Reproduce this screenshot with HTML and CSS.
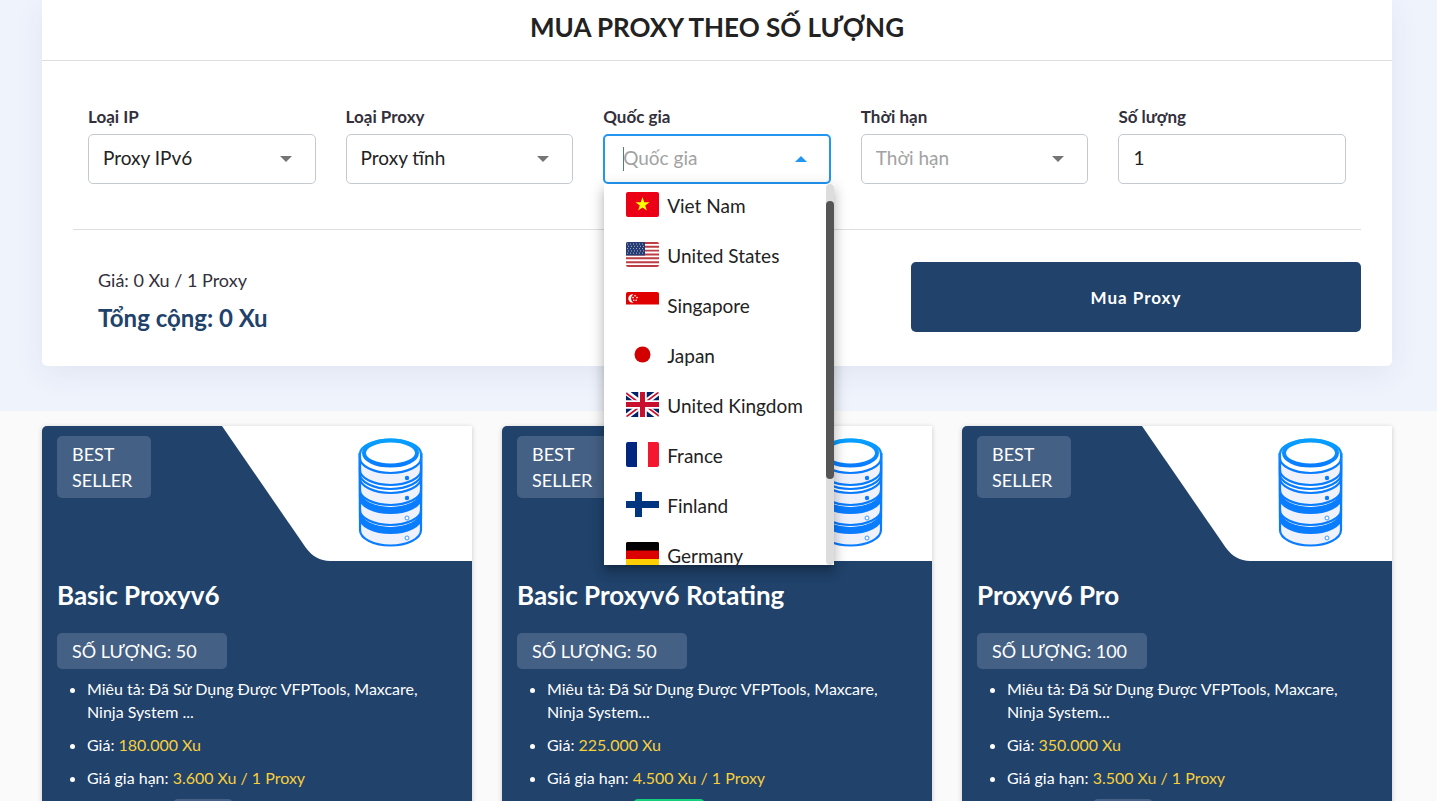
FILE: index.html
```
<!DOCTYPE html>
<html lang="vi">
<head>
    <meta charset="UTF-8">
    <meta name="viewport" content="width=device-width, initial-scale=1.0">
    <title>Mua Proxy</title>
    <link rel="stylesheet" href="styles.css">
</head>
<body>

    <!-- Shared shapes -->
    <svg class="sprite" width="0" height="0" aria-hidden="true">
        <defs>
            <linearGradient id="blue" gradientUnits="userSpaceOnUse" x1="0" y1="12" x2="0" y2="40">
                <stop offset="0" stop-color="#08a2ff"/>
                <stop offset="1" stop-color="#0a7cff"/>
            </linearGradient>
            <clipPath id="round">
                <rect width="33" height="25" rx="2"/>
            </clipPath>
        </defs>
        <symbol id="offer-art" viewBox="0 0 250 135">
            <path d="M0 0H250V135H108C98 135 90 130 84 122Z" fill="#fff"/>
            <g stroke="url(#blue)" stroke-width="2.200">
                <path d="M138 28V104A30.500 15.500 0 0 0 199 104V28Z" fill="#eff2fb"/>
                <path d="M138 28V92A30.500 15 0 0 0 199 92V28Z" fill="#0a7cff"/>
                <path d="M139 28V86A29.500 15 0 0 0 198 86V28Z" fill="#fff" stroke="none"/>
                <path d="M138 28V84A30.500 15 0 0 0 199 84V28Z" fill="#eff2fb"/>
                <path d="M138 28V72A30.500 15 0 0 0 199 72V28Z" fill="#0a7cff"/>
                <path d="M139 28V66A29.500 15 0 0 0 198 66V28Z" fill="#fff" stroke="none"/>
                <path d="M138 28V64A30.500 15 0 0 0 199 64V28Z" fill="#eff2fb"/>
                <path d="M138 28V52A30.500 15 0 0 0 199 52V28Z" fill="#fff"/>
                <path d="M138 28V48A30.500 15 0 0 0 199 48V28Z" fill="#fff"/>
                <path d="M138 28V44A30.500 15 0 0 0 199 44V28Z" fill="#eff2fb"/>
                <path d="M138 28V32A30.500 15 0 0 0 199 32V28Z" fill="#fff"/>
                <ellipse cx="168.500" cy="28" rx="30.500" ry="14.500" fill="#fff" stroke="none"/>
                <path d="M138 32V28A30.500 14.500 0 0 1 199 28V32" fill="none"/>
                <ellipse cx="168.500" cy="27" rx="26.500" ry="12.500" fill="#fff" stroke-width="4"/>
            </g>
            <circle cx="185" cy="52" r="2.200" fill="#0a7cff"/>
            <circle cx="185" cy="72" r="2.200" fill="#0a7cff"/>
            <circle cx="185" cy="92" r="2" fill="#fff" stroke="#3a9bff"/>
            <circle cx="185" cy="112" r="2" fill="#fff" stroke="#3a9bff"/>
        </symbol>
    </svg>

    <section class="buy">
        <form class="buy-card">
            <h2 class="buy-title">MUA PROXY THEO SỐ LƯỢNG</h2>

            <div class="fields">
                <div class="field">
                    <label for="ip-type">Loại IP</label>
                    <div class="control">
                        <select id="ip-type"><option>Proxy IPv6</option></select>
                        <span class="arrow"></span>
                    </div>
                </div>
                <div class="field">
                    <label for="proxy-type">Loại Proxy</label>
                    <div class="control">
                        <select id="proxy-type"><option>Proxy tĩnh</option></select>
                        <span class="arrow"></span>
                    </div>
                </div>
                <div class="field">
                    <label for="country">Quốc gia</label>
                    <div class="control open">
                        <input id="country" type="text" role="combobox" aria-expanded="true" aria-controls="country-list" placeholder="Quốc gia" autocomplete="off">
                        <span class="caret"></span>
                        <span class="arrow"></span>
                        <div class="menu">
                            <ul class="options" id="country-list" role="listbox">
                                <li role="option">
                                    <svg class="flag" viewBox="0 0 33 25"><g clip-path="url(#round)"><rect width="33" height="25" fill="#ec0015"/><path d="M16.500 5L18.200 10.200H23.600L19.200 13.400L20.900 18.600L16.500 15.400L12.100 18.600L13.800 13.400L9.400 10.200H14.800Z" fill="#ff0"/></g></svg>
                                    Viet Nam
                                </li>
                                <li role="option">
                                    <svg class="flag" viewBox="0 0 33 25"><g clip-path="url(#round)"><rect width="33" height="25" fill="#fff"/><path d="M0 1H33M0 4.800H33M0 8.600H33M0 12.500H33M0 16.300H33M0 20.200H33M0 24H33" stroke="#bd3d44" stroke-width="1.900"/><rect width="19" height="13.500" fill="#263d73"/><path d="M1 2H19M2 4.300H19M1 6.600H19M2 8.900H19M1 11.200H19" stroke="#aab3ca" stroke-dasharray="1 2"/></g></svg>
                                    United States
                                </li>
                                <li role="option">
                                    <svg class="flag" viewBox="0 0 33 25"><g clip-path="url(#round)"><rect width="33" height="25" fill="#fff"/><rect width="33" height="12.500" fill="#e00000"/><path d="M7.500 2.300A4.300 4.300 0 1 0 7.500 10.700A4.800 4.800 0 0 1 7.500 2.300Z" fill="#fff"/><g fill="#fff"><circle cx="9" cy="3.800" r=".8"/><circle cx="7" cy="5.600" r=".8"/><circle cx="11" cy="5.600" r=".8"/><circle cx="7.800" cy="8.200" r=".8"/><circle cx="10.200" cy="8.200" r=".8"/></g></g></svg>
                                    Singapore
                                </li>
                                <li role="option">
                                    <svg class="flag" viewBox="0 0 33 25"><circle cx="16.500" cy="12.500" r="8" fill="#d30000"/></svg>
                                    Japan
                                </li>
                                <li role="option">
                                    <svg class="flag" viewBox="0 0 33 25"><g clip-path="url(#round)"><rect width="33" height="25" fill="#012169"/><path d="M0 0L33 25M33 0L0 25" stroke="#fff" stroke-width="5.500"/><path d="M0 1L16 13M33 0L17 12M0 25L16 13M33 24L17 12" stroke="#c8102e" stroke-width="1.700"/><path d="M16.500 0V25M0 12.500H33" stroke="#fff" stroke-width="8.500"/><path d="M16.500 0V25M0 12.500H33" stroke="#c8102e" stroke-width="5"/></g></svg>
                                    United Kingdom
                                </li>
                                <li role="option">
                                    <svg class="flag" viewBox="0 0 33 25"><g clip-path="url(#round)"><rect width="11" height="25" fill="#00267f"/><rect x="11" width="11" height="25" fill="#fff"/><rect x="22" width="11" height="25" fill="#f31830"/></g></svg>
                                    France
                                </li>
                                <li role="option">
                                    <svg class="flag" viewBox="0 0 33 25"><g clip-path="url(#round)"><rect width="33" height="25" fill="#fff"/><path d="M12.500 0V25M0 12.500H33" stroke="#003580" stroke-width="7"/></g></svg>
                                    Finland
                                </li>
                                <li role="option">
                                    <svg class="flag" viewBox="0 0 33 25"><g clip-path="url(#round)"><rect width="33" height="25" fill="#ffce00"/><rect width="33" height="17" fill="#d00"/><rect width="33" height="8.500" fill="#000"/></g></svg>
                                    Germany
                                </li>
                            </ul>
                            <div class="scrollbar"><span class="thumb"></span></div>
                        </div>
                    </div>
                </div>
                <div class="field">
                    <label for="period">Thời hạn</label>
                    <div class="control">
                        <select id="period" class="empty"><option value="">Thời hạn</option></select>
                        <span class="arrow"></span>
                    </div>
                </div>
                <div class="field">
                    <label for="amount">Số lượng</label>
                    <div class="control">
                        <input id="amount" type="text" inputmode="numeric" value="1">
                    </div>
                </div>
            </div>

            <div class="summary">
                <div class="prices">
                    <p class="price">Giá: 0 Xu / 1 Proxy</p>
                    <p class="total">Tổng cộng: 0 Xu</p>
                </div>
                <button class="buy-btn" type="submit">Mua Proxy</button>
            </div>
        </form>
    </section>

    <!-- Offers -->
    <section class="offers">
        <article class="offer">
            <div class="offer-top">
                <span class="tag">BEST<br>SELLER</span>
                <svg class="offer-art" aria-hidden="true"><use href="#offer-art"/></svg>
            </div>
            <h3>Basic Proxyv6</h3>
            <span class="tag count">SỐ LƯỢNG: 50</span>
            <ul class="details">
                <li>Miêu tả: Đã Sử Dụng Được VFPTools, Maxcare, Ninja System ...</li>
                <li>Giá: <span class="gold">180.000 Xu</span></li>
                <li>Giá gia hạn: <span class="gold">3.600 Xu / 1 Proxy</span></li>
                <li><span class="chip"></span></li>
            </ul>
        </article>
        <article class="offer">
            <div class="offer-top">
                <span class="tag">BEST<br>SELLER</span>
                <svg class="offer-art" aria-hidden="true"><use href="#offer-art"/></svg>
            </div>
            <h3>Basic Proxyv6 Rotating</h3>
            <span class="tag count">SỐ LƯỢNG: 50</span>
            <ul class="details">
                <li>Miêu tả: Đã Sử Dụng Được VFPTools, Maxcare, Ninja System...</li>
                <li>Giá: <span class="gold">225.000 Xu</span></li>
                <li>Giá gia hạn: <span class="gold">4.500 Xu / 1 Proxy</span></li>
                <li><span class="chip green"></span></li>
            </ul>
        </article>
        <article class="offer">
            <div class="offer-top">
                <span class="tag">BEST<br>SELLER</span>
                <svg class="offer-art" aria-hidden="true"><use href="#offer-art"/></svg>
            </div>
            <h3>Proxyv6 Pro</h3>
            <span class="tag count">SỐ LƯỢNG: 100</span>
            <ul class="details">
                <li>Miêu tả: Đã Sử Dụng Được VFPTools, Maxcare, Ninja System...</li>
                <li>Giá: <span class="gold">350.000 Xu</span></li>
                <li>Giá gia hạn: <span class="gold">3.500 Xu / 1 Proxy</span></li>
                <li><span class="chip"></span></li>
            </ul>
        </article>
    </section>

</body>
</html>
```
FILE: styles.css
```
* {
    box-sizing: border-box;
}

body {
    margin: 0;
    height: 100vh;
    overflow: hidden;
    background-color: #fafafa;
    color: #33303c;
    font-family: Lato, 'Noto Sans', sans-serif;
    font-size: 17px;
}

.sprite {
    position: absolute;
}

.buy {
    padding: 0 45px 45px 42px;
    background-color: #eff3fc;
}

.buy-card {
    padding-bottom: 34px;
    background-color: #fff;
    border-radius: 0 0 5px 5px;
    box-shadow: 0 8px 30px rgba(30, 50, 110, 0.07);
}

.buy-title {
    margin: 0;
    padding: 7px 0 13px;
    border-bottom: 1px solid #dcdfe0;
    color: #222;
    font-size: 26px;
    line-height: 40px;
    text-align: center;
}

.fields {
    display: grid;
    grid-template-columns: repeat(5, 1fr);
    gap: 30px;
    margin: 0 31px;
    padding: 44px 15px 45px;
    border-bottom: 1px solid #dcdfe0;
}

.field label {
    display: block;
    margin-bottom: 5px;
    font-weight: bold;
    line-height: 24px;
}

.control {
    position: relative;
}

.control select,
.control input {
    display: block;
    width: 100%;
    height: 50px;
    padding: 0 14px 3px;
    border: 1px solid #c5c9d0;
    border-radius: 5px;
    background-color: #fff;
    color: #222;
    font-family: inherit;
    font-size: 19px;
    appearance: none;
    outline: none;
}

.control .empty,
.control input::placeholder {
    color: #a2a2a2;
    opacity: 1;
}

.control.open input {
    padding-left: 18px;
    border: 2px solid #2196f3;
}

/* triangle at the right end of a drop-down */
.arrow {
    position: absolute;
    top: 22px;
    right: 24px;
    border: 6px solid transparent;
    border-top-color: #757575;
    border-bottom: 0;
}

.open .arrow {
    border-top: 0;
    border-bottom: 6px solid #2196f3;
}

.caret {
    position: absolute;
    top: 13px;
    left: 20px;
    width: 1px;
    height: 24px;
    background-color: #4a7ba8;
}

.menu {
    position: absolute;
    top: 50px;
    left: 1px;
    z-index: 10;
    display: flex;
    width: 230px;
    height: 381px;
    overflow: hidden;
    background-color: #fff;
    box-shadow: 0 5px 5px -3px rgba(0, 0, 0, 0.2), 0 8px 10px 1px rgba(0, 0, 0, 0.14), 0 3px 14px 2px rgba(0, 0, 0, 0.12);
}

.options {
    flex: 1;
    margin: -3px 0 0;
    padding: 0;
    list-style: none;
}

.options li {
    display: flex;
    align-items: center;
    gap: 8px;
    height: 50px;
    padding: 0 0 2px 22px;
    color: #222;
    font-size: 19px;
    white-space: nowrap;
}

.flag {
    width: 33px;
    height: 25px;
    margin-bottom: 2px;
}

.scrollbar {
    width: 8px;
    padding-top: 17px;
    border-radius: 4px;
    background-color: #ddd;
}

.thumb {
    display: block;
    height: 278px;
    border-radius: 4px;
    background-color: #555;
}

.summary {
    display: flex;
    justify-content: space-between;
    padding: 32px 31px 0 56px;
}

.price,
.total {
    margin: 0;
}

.price {
    padding-top: 2px;
    font-size: 18px;
    line-height: 32px;
}

.total {
    padding-top: 8px;
    color: #20426b;
    font-size: 24px;
    font-weight: bold;
    line-height: 28px;
}

.buy-btn {
    width: 450px;
    height: 70px;
    border: none;
    border-radius: 5px;
    background-color: #20426b;
    color: #fff;
    font-family: inherit;
    font-size: 17px;
    font-weight: bold;
    letter-spacing: 1px;
    cursor: pointer;
}

.offers {
    display: grid;
    grid-template-columns: repeat(3, 1fr);
    gap: 30px;
    padding: 15px 45px 30px 42px;
}

.offer {
    overflow: hidden;
    padding-bottom: 30px;
    border-radius: 5px 0 0 0;
    background-color: #20426b;
    box-shadow: 0 1px 5px rgba(0, 0, 0, 0.2);
    color: #fff;
}

.offer-top {
    display: flex;
    justify-content: space-between;
    align-items: flex-start;
}

.offer-art {
    width: 250px;
    height: 135px;
}

.tag {
    display: block;
    min-width: 94px;
    margin: 10px 0 0 15px;
    padding: 5px 15px;
    border-radius: 5px;
    background-color: #446084;
    font-size: 18px;
    line-height: 26px;
}

.count {
    width: 170px;
    margin-top: 0;
}

.offer h3 {
    margin: 0;
    padding: 14px 15px 18px;
    font-size: 26px;
    line-height: 40px;
}

.details {
    margin: 0;
    padding: 8px 30px 0 45px;
    font-size: 16px;
    line-height: 23px;
}

.details li {
    margin-bottom: 10px;
}

.gold {
    color: #f8cf3a;
}

.chip {
    display: block;
    width: 60px;
    height: 24px;
    margin-left: 86px;
    border-radius: 5px;
    background-color: #446084;
}

.chip.green {
    width: 72px;
    background-color: #13ce7c;
}
```
